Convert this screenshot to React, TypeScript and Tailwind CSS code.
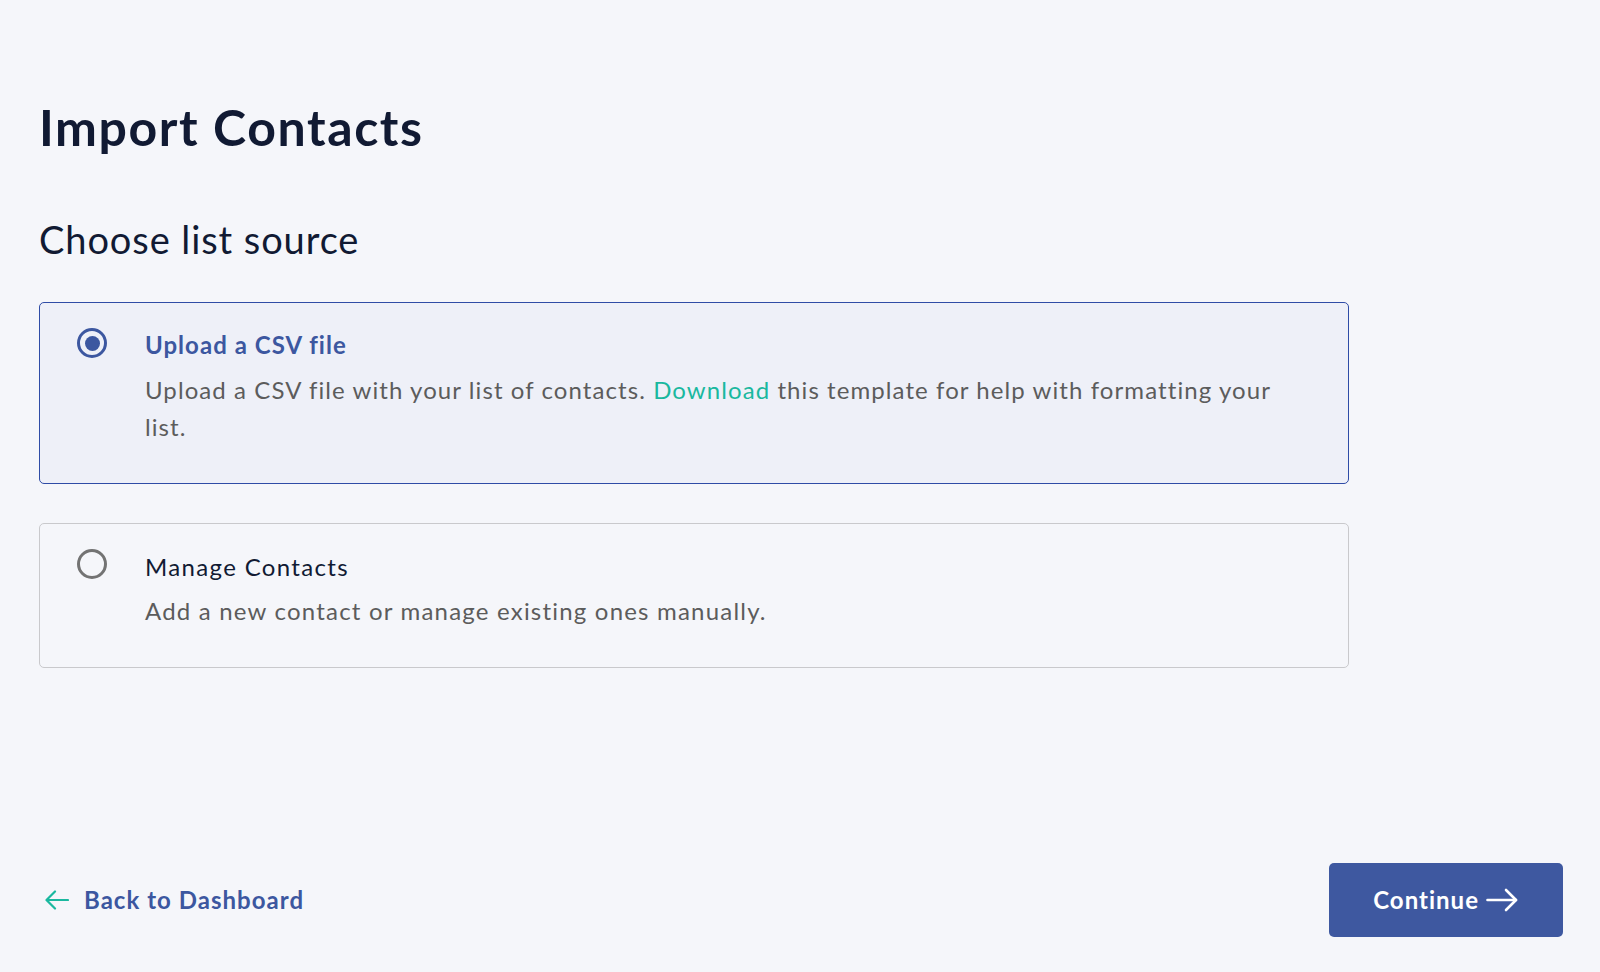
import React, { useState } from "react";

type Source = "csv" | "manual";

const Radio = ({ checked }: { checked: boolean }) => (
  <span
    className={`mt-[1px] flex h-[30px] w-[30px] shrink-0 items-center justify-center rounded-full border-[3px] ${
      checked ? "border-[#3c57a0]" : "border-[#737373]"
    }`}
  >
    {checked && <span className="h-[15px] w-[15px] rounded-full bg-[#3c57a0]" />}
  </span>
);

export default function App() {
  const [source, setSource] = useState<Source>("csv");

  return (
    <div
      className="flex min-h-screen flex-col bg-[#f5f6fa] pl-[39px] pr-[37px]"
      style={{ fontFamily: "Lato, 'Open Sans', sans-serif" }}
    >
      <div className="flex-1">
        {/* Encabezado */}
        <h1 className="pt-[97px] text-[50px] leading-[60px] font-bold tracking-[0.032em] text-[#111a33]">
          Import Contacts
        </h1>
        <h2 className="mt-[59px] text-[38px] leading-[46px] font-normal tracking-[0.024em] text-[#111a33]">
          Choose list source
        </h2>

        {/* Opciones */}
        <div className="mt-[40px] flex w-[1310px] flex-col gap-[39px]">
          <button
            onClick={() => setSource("csv")}
            className={`flex items-start gap-[38px] rounded-[5px] border pt-6 pb-[38px] pl-[37px] pr-10 text-left ${
              source === "csv"
                ? "border-[#2f4ca6] bg-[#eef0f8]"
                : "border-[#c9c9cc] bg-[#f5f6fa]"
            }`}
          >
            <Radio checked={source === "csv"} />
            <div className="pt-[2px]">
              <div
                className={`text-[24px] leading-[32px] ${
                  source === "csv"
                    ? "font-bold tracking-[0.043em] text-[#3c57a0]"
                    : "tracking-[0.056em] text-[#111a33]"
                }`}
              >
                Upload a CSV file
              </div>
              <p className="mt-[10px] max-w-[1145px] text-[24px] leading-[37px] tracking-[0.045em] text-[#5c5c5c]">
                <span>Upload a CSV file with your list of contacts. </span>
                <span className="text-[#1ab89f]">Download</span>
                <span> this template for help with formatting your </span>
                <span>list.</span>
              </p>
            </div>
          </button>

          <button
            onClick={() => setSource("manual")}
            className={`flex items-start gap-[38px] rounded-[5px] border pt-6 pb-[38px] pl-[37px] pr-10 text-left ${
              source === "manual"
                ? "border-[#2f4ca6] bg-[#eef0f8]"
                : "border-[#c9c9cc] bg-[#f5f6fa]"
            }`}
          >
            <Radio checked={source === "manual"} />
            <div className="pt-[3px]">
              <div
                className={`text-[24px] leading-[32px] ${
                  source === "manual"
                    ? "font-bold tracking-[0.043em] text-[#3c57a0]"
                    : "tracking-[0.056em] text-[#111a33]"
                }`}
              >
                Manage Contacts
              </div>
              <p className="mt-[9px] text-[24px] leading-[37px] tracking-[0.05em] text-[#5c5c5c]">
                Add a new contact or manage existing ones manually.
              </p>
            </div>
          </button>
        </div>
      </div>

      {/* Pie */}
      <div className="flex items-center justify-between pb-[35px]">
        <a href="#" className="flex items-center gap-[15px] pl-[6px] text-[24px] font-bold tracking-[0.043em] text-[#3c57a0]">
          <svg width="24" height="20" viewBox="0 0 24 20" fill="none" stroke="#1ab89f" strokeWidth="2.2" strokeLinecap="round" strokeLinejoin="round">
            <path d="M23 10H2" />
            <path d="M10 1.5 1.5 10 10 18.5" />
          </svg>
          Back to Dashboard
        </a>
        <button className="flex h-[74px] items-center gap-[7px] rounded-[5px] bg-[#3e58a0] pl-[44px] pr-[45px] text-[24px] font-bold tracking-[0.042em] text-white">
          Continue
          <svg width="32" height="24" viewBox="0 0 32 24" fill="none" stroke="white" strokeWidth="2.6" strokeLinecap="round" strokeLinejoin="round">
            <path d="M1.5 12H30" />
            <path d="M20 2 30 12 20 22" />
          </svg>
        </button>
      </div>
    </div>
  );
}
